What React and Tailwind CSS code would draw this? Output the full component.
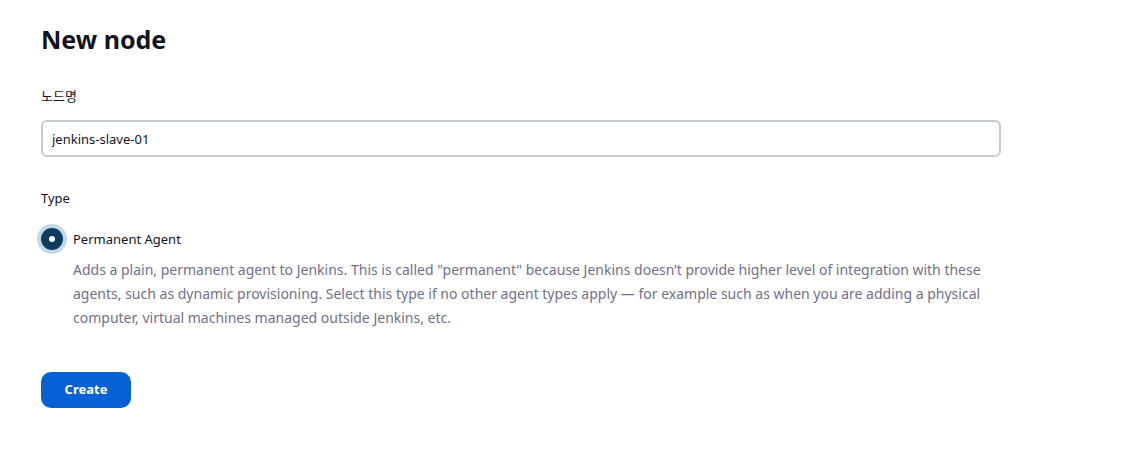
export default function App() {
  return (
    <div
      className="min-h-[470px] bg-white px-[41px] pt-[23px] text-[#14141f]"
      style={{ fontFamily: '"Noto Sans", "Noto Sans CJK KR", sans-serif' }}
    >
      <h1 className="text-[25px] font-bold leading-[32px]">New node</h1>

      <label className="mt-[31px] block text-[13px] leading-[20px]">노드명</label>
      <input
        type="text"
        defaultValue="jenkins-slave-01"
        className="mt-[14px] block h-[37px] w-[960px] rounded-[6px] border-2 border-[#c4ced2] px-[9px] text-[13px] text-[#14141f] outline-none"
      />

      <div className="mt-[31px] text-[13px] leading-[20px]">Type</div>

      <div className="mt-[20px] flex items-center gap-[10px]">
        <span className="flex h-[22px] w-[22px] items-center justify-center rounded-full bg-[#0e3c5e] ring-[4px] ring-[#c2dae7]">
          <span className="h-[6px] w-[6px] rounded-full bg-white" />
        </span>
        <span className="text-[13px] leading-[20px]">Permanent Agent</span>
      </div>
      <p className="ml-[32px] mt-[8px] w-[910px] text-[14px] leading-[24px] text-[#72708a]">
        Adds a plain, permanent agent to Jenkins. This is called "permanent" because Jenkins doesn’t provide higher level of integration with these agents, such as dynamic provisioning. Select this type if no other agent types apply — for example such as when you are adding a physical computer, virtual machines managed outside Jenkins, etc.
      </p>

      <button className="mt-[42px] flex h-[36px] w-[90px] items-center justify-center rounded-[10px] bg-[#0662d4] text-[13px] font-bold text-white">
        Create
      </button>
    </div>
  );
}
